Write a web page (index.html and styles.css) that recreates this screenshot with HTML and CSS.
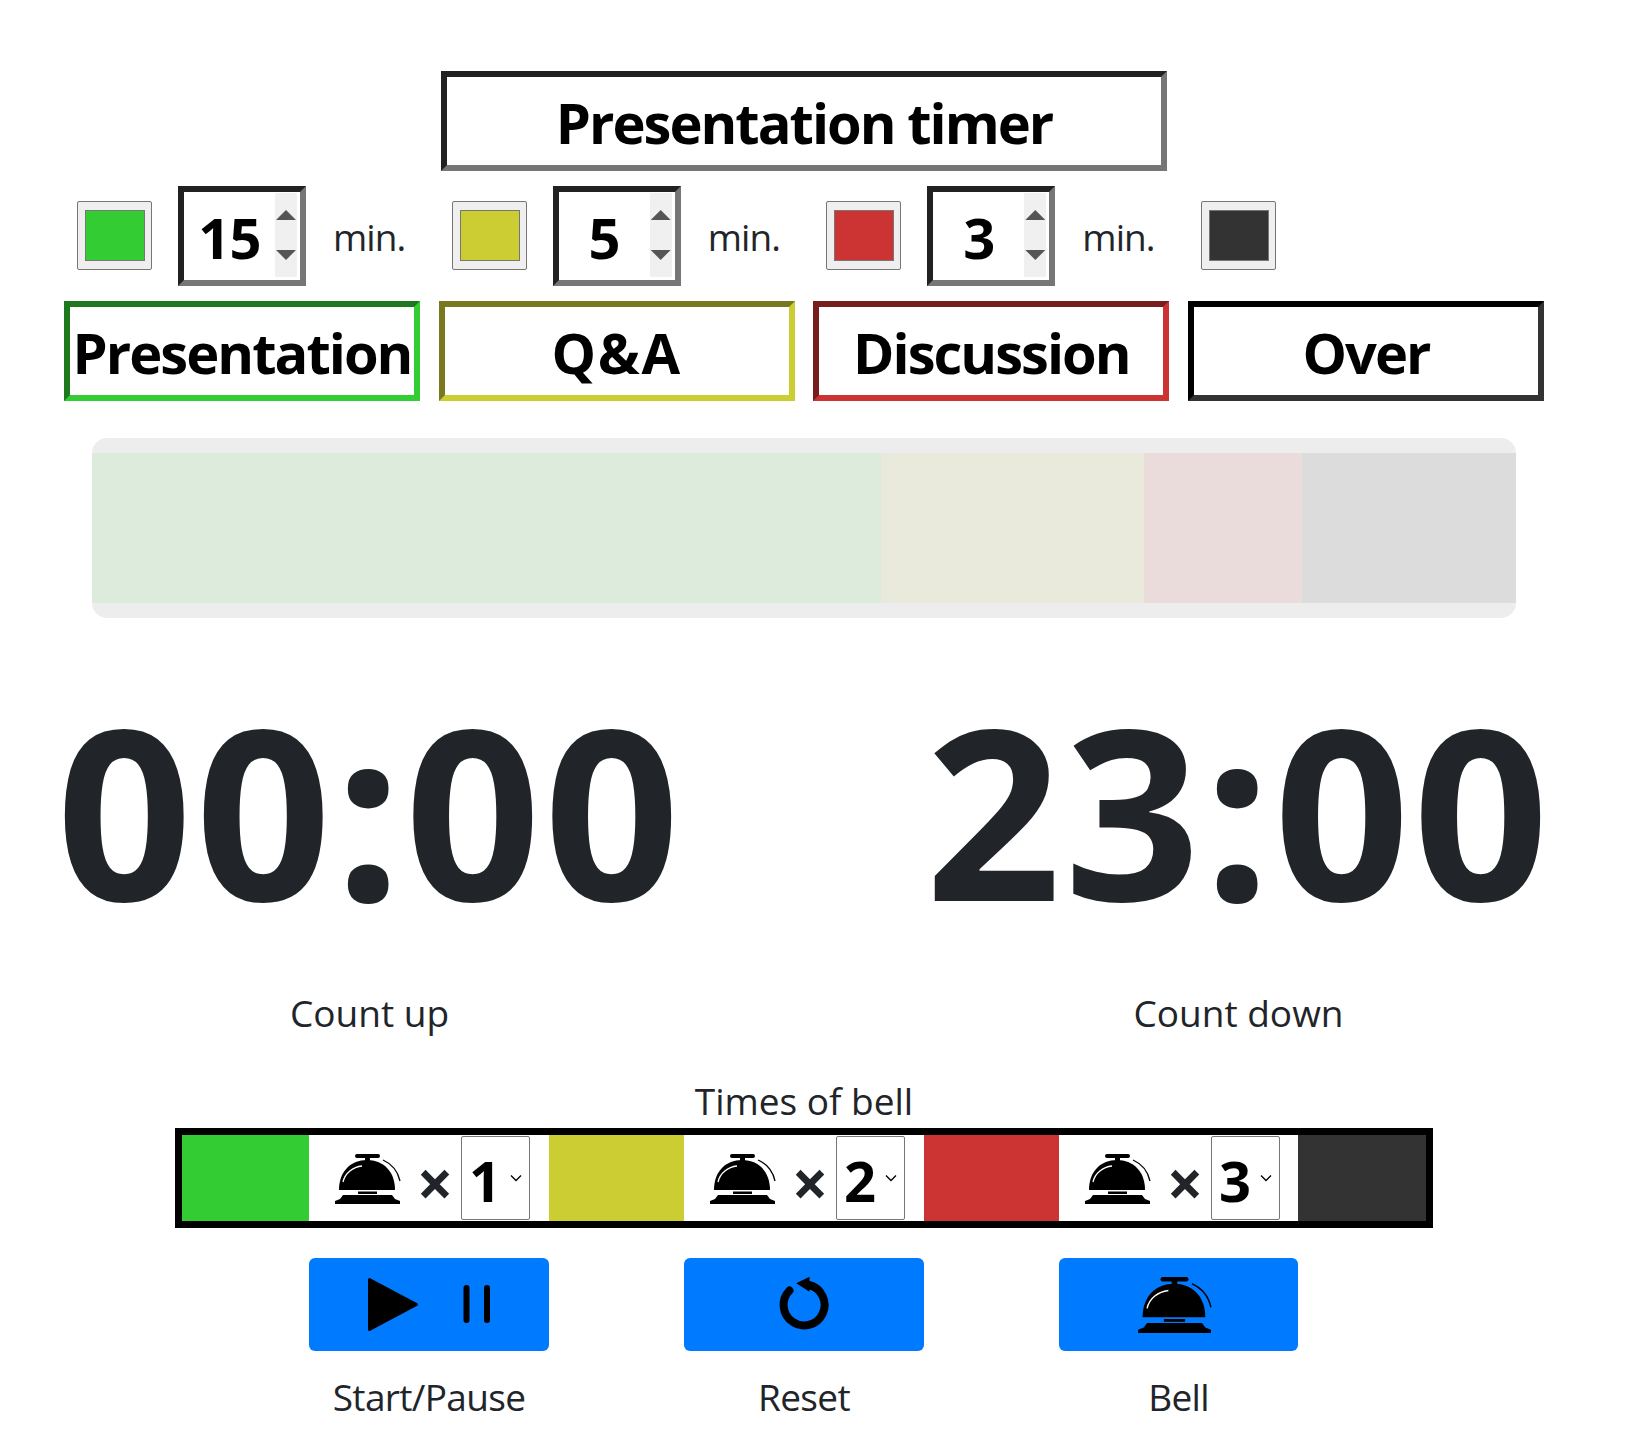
FILE: index.html
```html
<!DOCTYPE html>
<html lang="en">

<head>
    <meta charset="UTF-8">
    <title>Presentation timer</title>
    <link rel="stylesheet" href="styles.css">
</head>

<body>
    <svg class="icon-defs" width="0" height="0">
        <symbol id="bell" viewBox="0 0 73 50">
            <rect x="20" y="0" width="25" height="4" rx="2" />
            <rect x="30" y="3" width="5" height="4" />
            <path d="M4 36 C4 17 16 6 32 6 C48 6 60 17 60 36 Z" />
            <rect x="23" y="37.5" width="19" height="2.5" />
            <path d="M8 41 H57 L60 45 L65 47 V50 H0 V47 L5 45 Z" />
            <path class="bell-shine" d="M8 28 C10 19 18 13 27 12" />
            <path class="bell-ring" d="M48 6 C57 10 63 18 65 27" />
        </symbol>
    </svg>

    <main class="page">
        <div class="box title">Presentation timer</div>

        <div class="columns">
            <div class="setting">
                <input class="swatch" type="color" value="#33cc33">
                <div class="box minutes"><span class="minutes-value">15</span><span class="spinner"><i class="up"></i><i class="down"></i></span></div>
                <span class="unit">min.</span>
            </div>
            <div class="setting">
                <input class="swatch" type="color" value="#cccc33">
                <div class="box minutes"><span class="minutes-value">5</span><span class="spinner"><i class="up"></i><i class="down"></i></span></div>
                <span class="unit">min.</span>
            </div>
            <div class="setting">
                <input class="swatch" type="color" value="#cc3333">
                <div class="box minutes"><span class="minutes-value">3</span><span class="spinner"><i class="up"></i><i class="down"></i></span></div>
                <span class="unit">min.</span>
            </div>
            <div class="setting">
                <input class="swatch" type="color" value="#333333">
            </div>
        </div>

        <div class="columns phases">
            <div class="box phase green">Presentation</div>
            <div class="box phase yellow">Q&amp;A</div>
            <div class="box phase red">Discussion</div>
            <div class="box phase dark">Over</div>
        </div>

        <div class="progress">
            <div class="segment seg-green" style="width: 55.4%"></div>
            <div class="segment seg-yellow" style="width: 18.5%"></div>
            <div class="segment seg-red" style="width: 11.1%"></div>
            <div class="segment seg-dark" style="width: 15%"></div>
        </div>

        <div class="clocks">
            <div class="clock">
                <div class="clock-time">00:00</div>
                <div class="caption">Count up</div>
            </div>
            <div class="clock">
                <div class="clock-time">23:00</div>
                <div class="caption">Count down</div>
            </div>
        </div>

        <div class="caption bell-caption">Times of bell</div>
        <div class="bell-table">
            <div class="bell-color green-bg"></div>
            <div class="bell-cell">
                <svg class="bell-icon"><use href="#bell" /></svg>
                <span class="times">×</span>
                <select class="bell-count">
                    <option selected>1</option>
                    <option>2</option>
                    <option>3</option>
                </select>
            </div>
            <div class="bell-color yellow-bg"></div>
            <div class="bell-cell">
                <svg class="bell-icon"><use href="#bell" /></svg>
                <span class="times">×</span>
                <select class="bell-count">
                    <option>1</option>
                    <option selected>2</option>
                    <option>3</option>
                </select>
            </div>
            <div class="bell-color red-bg"></div>
            <div class="bell-cell">
                <svg class="bell-icon"><use href="#bell" /></svg>
                <span class="times">×</span>
                <select class="bell-count">
                    <option>1</option>
                    <option>2</option>
                    <option selected>3</option>
                </select>
            </div>
            <div class="bell-color dark-bg"></div>
        </div>

        <div class="actions">
            <div class="action">
                <button class="action-btn" type="button">
                    <svg class="play-icon" viewBox="0 0 122 53">
                        <path class="play-shape" d="M1.5 1.5 L48.5 26.5 L1.5 51.5 Z" />
                        <rect x="95.5" y="7" width="6" height="38" rx="3" />
                        <rect x="116" y="7" width="6" height="38" rx="3" />
                    </svg>
                </button>
                <div class="caption">Start/Pause</div>
            </div>
            <div class="action">
                <button class="action-btn" type="button">
                    <svg class="reset-icon" viewBox="0 0 60 60">
                        <path class="reset-ring" d="M15.5 15.5 A20.5 20.5 0 1 0 35 10" />
                        <path d="M22.2 8.3 L35.5 1.7 V16.7 Z" />
                    </svg>
                </button>
                <div class="caption">Reset</div>
            </div>
            <div class="action">
                <button class="action-btn" type="button">
                    <svg class="bell-icon-lg"><use href="#bell" /></svg>
                </button>
                <div class="caption">Bell</div>
            </div>
        </div>
    </main>
</body>

</html>
```

FILE: styles.css
```css
/* General */
* {
    box-sizing: border-box;
}

body {
    margin: 0;
    background: #fff;
    color: #212529;
    font-family: "Open Sans", "Noto Sans", sans-serif;
}

.icon-defs {
    display: block;
    height: 0;
}

.page {
    width: 1608px;
    height: 1430px;
    padding-top: 71px;
    overflow: hidden;
}

/* Inset boxes */
.box {
    display: flex;
    align-items: center;
    justify-content: center;
    height: 100px;
    padding-top: 2px;
    border: 6px inset #767676;
    color: #000;
    font-size: 56px;
    font-weight: 700;
    letter-spacing: -0.035em;
    white-space: nowrap;
}

.title {
    width: 726px;
    margin: 0 auto 15px;
}

.columns {
    display: grid;
    grid-template-columns: repeat(4, 356px);
    justify-content: center;
    column-gap: 18.67px;
}

/* Minutes row */
.setting {
    display: flex;
    align-items: center;
    height: 100px;
    padding-left: 13px;
}

.swatch {
    width: 75px;
    height: 69px;
    margin: -2px 26px 0 0;
    padding: 8px 6px 8px 7px;
    border: 1px solid #767676;
    border-radius: 2px;
    background: #efefef;
    appearance: none;
}

.swatch::-webkit-color-swatch-wrapper {
    padding: 0;
}

.swatch::-webkit-color-swatch {
    border: 1px solid #767676;
    border-radius: 0;
}

.minutes {
    width: 128px;
    flex: none;
    justify-content: flex-start;
    padding-top: 0;
    letter-spacing: -0.015em;
}

.minutes-value {
    width: 91px;
    padding-top: 2px;
    text-align: center;
}

.spinner {
    display: flex;
    flex-direction: column;
    justify-content: space-between;
    align-items: center;
    width: 22px;
    height: 84px;
    margin-top: -2px;
    padding: 17px 0;
    background: #f0f0f0;
}

.spinner i {
    display: block;
    width: 20px;
    height: 10px;
    background: #555;
}

.spinner .up {
    clip-path: polygon(50% 0, 100% 100%, 0 100%);
}

.spinner .down {
    clip-path: polygon(0 0, 100% 0, 50% 100%);
}

.unit {
    margin-left: 27px;
    font-size: 37px;
    letter-spacing: -0.025em;
}

/* Phase labels */
.phases {
    margin-top: 15px;
}

.phase.green {
    border-color: #33cc33;
}

.phase.yellow {
    border-color: #cccc33;
    letter-spacing: 0.03em;
}

.phase.red {
    border-color: #cc3333;
}

.phase.dark {
    border-style: solid;
    border-color: #000 #333 #333 #000;
}

/* Progress bar */
.progress {
    display: flex;
    width: 1424px;
    height: 180px;
    margin: 37px auto 0;
    padding: 15px 0;
    border-radius: 15px;
    background: #ededed;
    overflow: hidden;
}

.seg-green {
    background: #dcebdc;
}

.seg-yellow {
    background: #eaeadc;
}

.seg-red {
    background: #ebdcdc;
}

.seg-dark {
    background: #dcdcdc;
}

/* Clocks */
.clocks {
    display: grid;
    grid-template-columns: 640px 640px;
    justify-content: center;
    column-gap: 229px;
    margin-top: 36px;
}

.clock {
    text-align: center;
}

.clock-time {
    height: 323px;
    font-size: 238px;
    font-weight: 700;
    line-height: 310px;
    letter-spacing: 0.012em;
    white-space: nowrap;
}

.caption {
    font-size: 37px;
    line-height: 50px;
    text-align: center;
}

.clock .caption {
    margin-top: 11px;
}

.bell-caption {
    margin-top: 38px;
    height: 52px;
}

/* Bell table */
.bell-table,
.actions {
    display: grid;
    grid-template-columns: 127px 240px 135px 240px 135px 239px 128px;
    width: 1258px;
    margin: 0 auto;
}

.bell-table {
    height: 100px;
    border: 7px solid #000;
}

.bell-cell {
    display: flex;
    align-items: center;
    padding-left: 26px;
}

.bell-icon {
    flex: none;
    width: 73px;
    height: 50px;
    margin-top: 2px;
}

.bell-icon-lg {
    width: 82px;
    height: 56px;
}

.bell-shine {
    fill: none;
    stroke: #fff;
    stroke-width: 1.3;
}

.bell-ring {
    fill: none;
    stroke: #000;
    stroke-width: 1.3;
}

.play-shape {
    stroke: #000;
    stroke-width: 3;
    stroke-linejoin: round;
}

.times {
    width: 54px;
    margin-top: 10px;
    color: #212529;
    font-size: 64px;
    font-weight: 700;
    line-height: 1;
    text-align: center;
}

.bell-count {
    flex: none;
    width: 69px;
    height: 84px;
    margin-left: -1px;
    padding: 4px 0 0 7px;
    border: 1px solid #767676;
    border-radius: 2px;
    background: #fff url("data:image/svg+xml,%3Csvg xmlns='http://www.w3.org/2000/svg' viewBox='0 0 12 8'%3E%3Cpath d='M1 1.5 L6 6.5 L11 1.5' fill='none' stroke='%23000' stroke-width='1.3'/%3E%3C/svg%3E") no-repeat 48px 37px / 12px 8px;
    color: #000;
    font-family: inherit;
    font-size: 56px;
    font-weight: 700;
    appearance: none;
}

.green-bg {
    background: #33cc33;
}

.yellow-bg {
    background: #cccc33;
}

.red-bg {
    background: #cc3333;
}

.dark-bg {
    background: #333;
}

/* Buttons */
.actions {
    margin-top: 30px;
    padding: 0 7px;
}

.action:nth-child(1) {
    grid-column: 2;
}

.action:nth-child(2) {
    grid-column: 4;
}

.action:nth-child(3) {
    grid-column: 6;
}

.action-btn {
    display: flex;
    align-items: center;
    justify-content: center;
    width: 100%;
    height: 93px;
    padding: 0;
    border: none;
    border-radius: 6px;
    background: #007bff;
    cursor: pointer;
}

.action .caption {
    margin-top: 21px;
    letter-spacing: -0.018em;
}

.play-icon {
    width: 122px;
    height: 53px;
    overflow: visible;
}

.reset-icon {
    width: 60px;
    height: 60px;
}

.reset-ring {
    fill: none;
    stroke: #000;
    stroke-width: 8;
    stroke-linecap: round;
}
```
